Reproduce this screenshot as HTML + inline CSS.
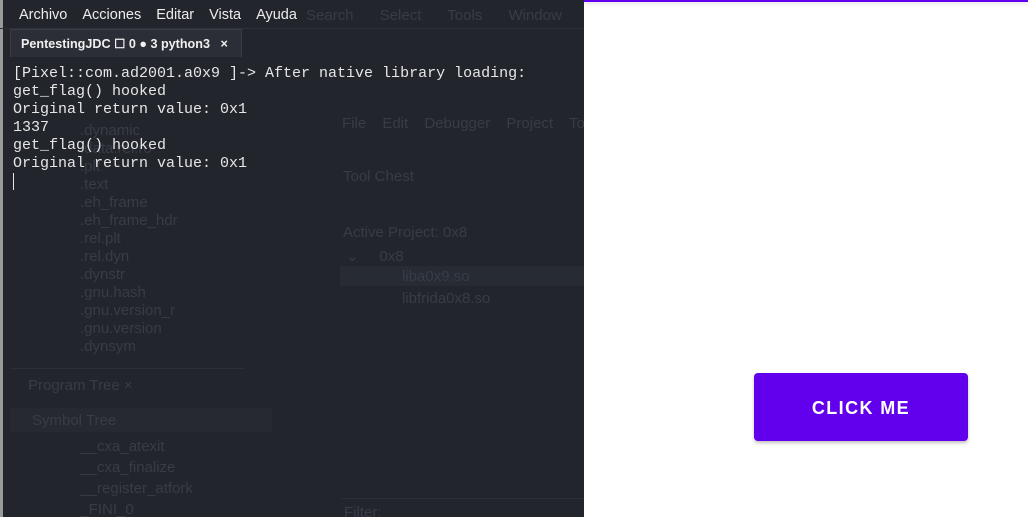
<!DOCTYPE html>
<html><head><meta charset="utf-8"><style>
html,body{margin:0;padding:0;width:1028px;height:517px;overflow:hidden;background:#fff;font-family:"Liberation Sans",sans-serif}
#left{position:absolute;left:0;top:0;width:584px;height:517px;background:#22252c;overflow:hidden}
.g{position:absolute;color:#383c45;font-size:15px;white-space:nowrap}
.m{position:absolute;left:19px;top:7px;line-height:16px;font-size:14.5px;color:#ececec;white-space:nowrap}
.m span{margin-right:15px}
#tab{position:absolute;left:10px;top:29px;width:232px;height:28px;background:#2b2e36;border:1px solid #3a3d45;border-bottom:none;color:#f0f0f0;font-weight:bold;font-size:12.6px;line-height:28px;padding-left:10px;box-sizing:border-box;white-space:nowrap;overflow:hidden}
#term{position:absolute;left:13px;top:65px;font-family:"Liberation Mono",monospace;font-size:15px;line-height:18px;color:#e6e6e6;white-space:pre}
#edge{position:absolute;left:0;top:0;width:3px;height:517px;background:#9a9a9a}
#bar{position:absolute;left:584px;top:0;width:444px;height:2px;background:#6200ee;box-shadow:0 1px 4px rgba(0,0,0,.2)}
#btn{position:absolute;left:754px;top:373px;width:214px;height:68px;background:#6200ee;border-radius:4px;color:#fff;font-size:18px;letter-spacing:1.4px;text-align:center;line-height:70px;font-weight:bold;box-shadow:0 2px 3px rgba(0,0,0,.25)}
</style></head><body>
<div id="left">
<div id="edge"></div>
<div class="g" style="left:306px;top:7px;font-size:15px;word-spacing:22px">Search Select Tools Window Help</div>
<div class="g" style="left:342px;top:115px;word-spacing:12px">File Edit Debugger Project To</div>
<div class="g" style="left:343px;top:168px">Tool Chest</div>
<div class="g" style="left:343px;top:224px">Active Project: 0x8</div>
<div class="g" style="left:346px;top:247px">⌄ &nbsp;&nbsp;&nbsp;&nbsp;0x8</div>
<div style="position:absolute;left:340px;top:266px;width:244px;height:20px;background:#272b34"></div>
<div class="g" style="left:402px;top:268px">liba0x9.so</div>
<div class="g" style="left:402px;top:290px">libfrida0x8.so</div>
<div class="g" style="left:80px;top:122px;line-height:18px;white-space:pre">.dynamic
.data.rel.ro
.plt
.text
.eh_frame
.eh_frame_hdr
.rel.plt
.rel.dyn
.dynstr
.gnu.hash
.gnu.version_r
.gnu.version
.dynsym</div>
<div style="position:absolute;left:10px;top:368px;width:235px;height:1px;background:#2c2f37"></div>
<div class="g" style="left:28px;top:377px">Program Tree ×</div>
<div style="position:absolute;left:10px;top:408px;width:262px;height:24px;background:#262930"></div>
<div class="g" style="left:32px;top:412px">Symbol Tree</div>
<div class="g" style="left:72px;top:436px;line-height:21px;white-space:pre">  __cxa_atexit
  __cxa_finalize
  __register_atfork
  _FINI_0</div>
<div style="position:absolute;left:342px;top:498px;width:242px;height:1px;background:#2c2f37"></div>
<div class="g" style="left:344px;top:504px">Filter:</div>
<div style="position:absolute;left:0;top:28px;width:584px;height:1px;background:#2e3139"></div>
<div class="m"><span>Archivo</span><span>Acciones</span><span>Editar</span><span>Vista</span><span>Ayuda</span></div>
<div id="tab">PentestingJDC ☐ 0 ● 3 python3 &nbsp;&nbsp;×</div>
<div id="term">[Pixel::com.ad2001.a0x9 ]-&gt; After native library loading:
get_flag() hooked
Original return value: 0x1
1337
get_flag() hooked
Original return value: 0x1
<span style="border-left:1px solid #e6e6e6"></span></div>
</div>
<div id="bar"></div>
<div id="btn">CLICK ME</div>
</body></html>
